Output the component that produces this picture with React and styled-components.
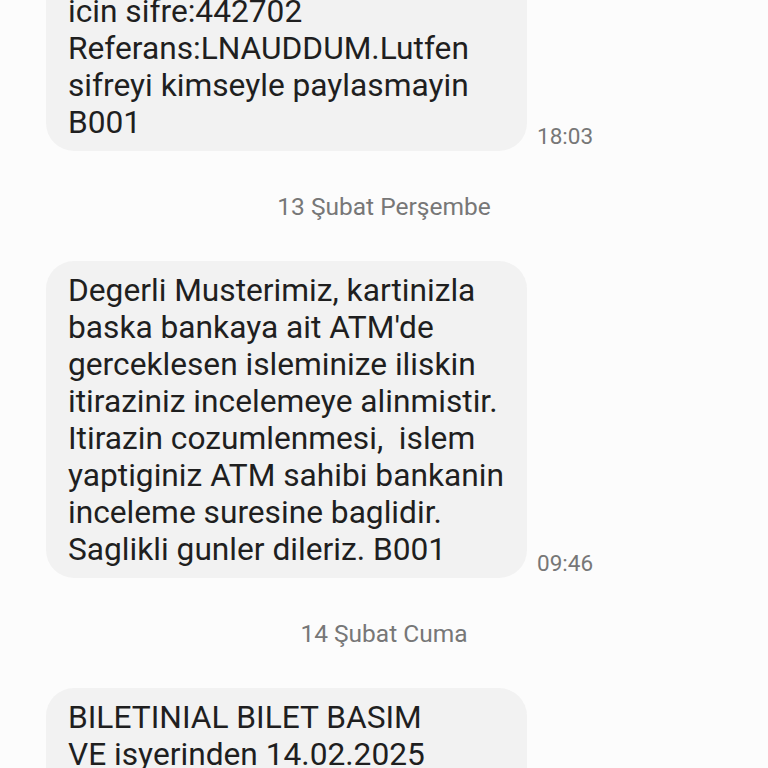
import React from "react";
import styled, { createGlobalStyle } from "styled-components";

const GlobalStyle = createGlobalStyle`
  html, body {
    margin: 0;
    padding: 0;
    background: #fcfcfc;
  }
  body {
    font-family: Roboto, "Noto Sans", sans-serif;
  }
`;

const Screen = styled.div`
  width: 768px;
  height: 768px;
  overflow: hidden;
  background: #fcfcfc;
`;

const Thread = styled.div`
  display: flex;
  flex-direction: column;
  margin-top: -57px;
`;

const Row = styled.div`
  display: flex;
  align-items: flex-end;
  gap: 10px;
  padding-left: 46px;
`;

const Bubble = styled.div`
  width: 481px;
  flex-shrink: 0;
  box-sizing: border-box;
  padding: ${({ $continued }) => ($continued ? "50px 22px 10px" : "11px 22px 10px")};
  background: #f2f2f2;
  border-radius: ${({ $continued }) => ($continued ? "0 0 28px 28px" : "28px")};
  color: #1f1f1f;
  font-size: 31.7px;
  line-height: 37px;
  white-space: pre;
`;

const Time = styled.span`
  font-size: 22.5px;
  line-height: 22px;
  color: #777;
  padding-bottom: 4px;
`;

const DateLabel = styled.div`
  text-align: center;
  font-size: 24.5px;
  line-height: 28px;
  color: #777;
  margin: 42px 0 40px;
`;

const Message = ({ lines, time, continued }) => (
  <Row>
    <Bubble $continued={continued}>
      {lines.map((l, i) => (
        <React.Fragment key={i}>
          {l}
          {i < lines.length - 1 && <br />}
        </React.Fragment>
      ))}
    </Bubble>
    {time && <Time>{time}</Time>}
  </Row>
);

export default function App() {
  return (
    <Screen>
      <GlobalStyle />
      <Thread>
        <Message
          continued
          time="18:03"
          lines={[
            "icin sifre:442702",
            "Referans:LNAUDDUM.Lutfen",
            "sifreyi kimseyle paylasmayin",
            "B001",
          ]}
        />
        <DateLabel>13 Şubat Perşembe</DateLabel>
        <Message
          time="09:46"
          lines={[
            "Degerli Musterimiz, kartinizla",
            "baska bankaya ait ATM'de",
            "gerceklesen isleminize iliskin",
            "itiraziniz incelemeye alinmistir.",
            "Itirazin cozumlenmesi,  islem",
            "yaptiginiz ATM sahibi bankanin",
            "inceleme suresine baglidir.",
            "Saglikli gunler dileriz. B001",
          ]}
        />
        <DateLabel>14 Şubat Cuma</DateLabel>
        <Message
          lines={[
            "BILETINIAL BILET BASIM",
            "VE isyerinden 14.02.2025",
            "tarihinde",
          ]}
        />
      </Thread>
    </Screen>
  );
}
